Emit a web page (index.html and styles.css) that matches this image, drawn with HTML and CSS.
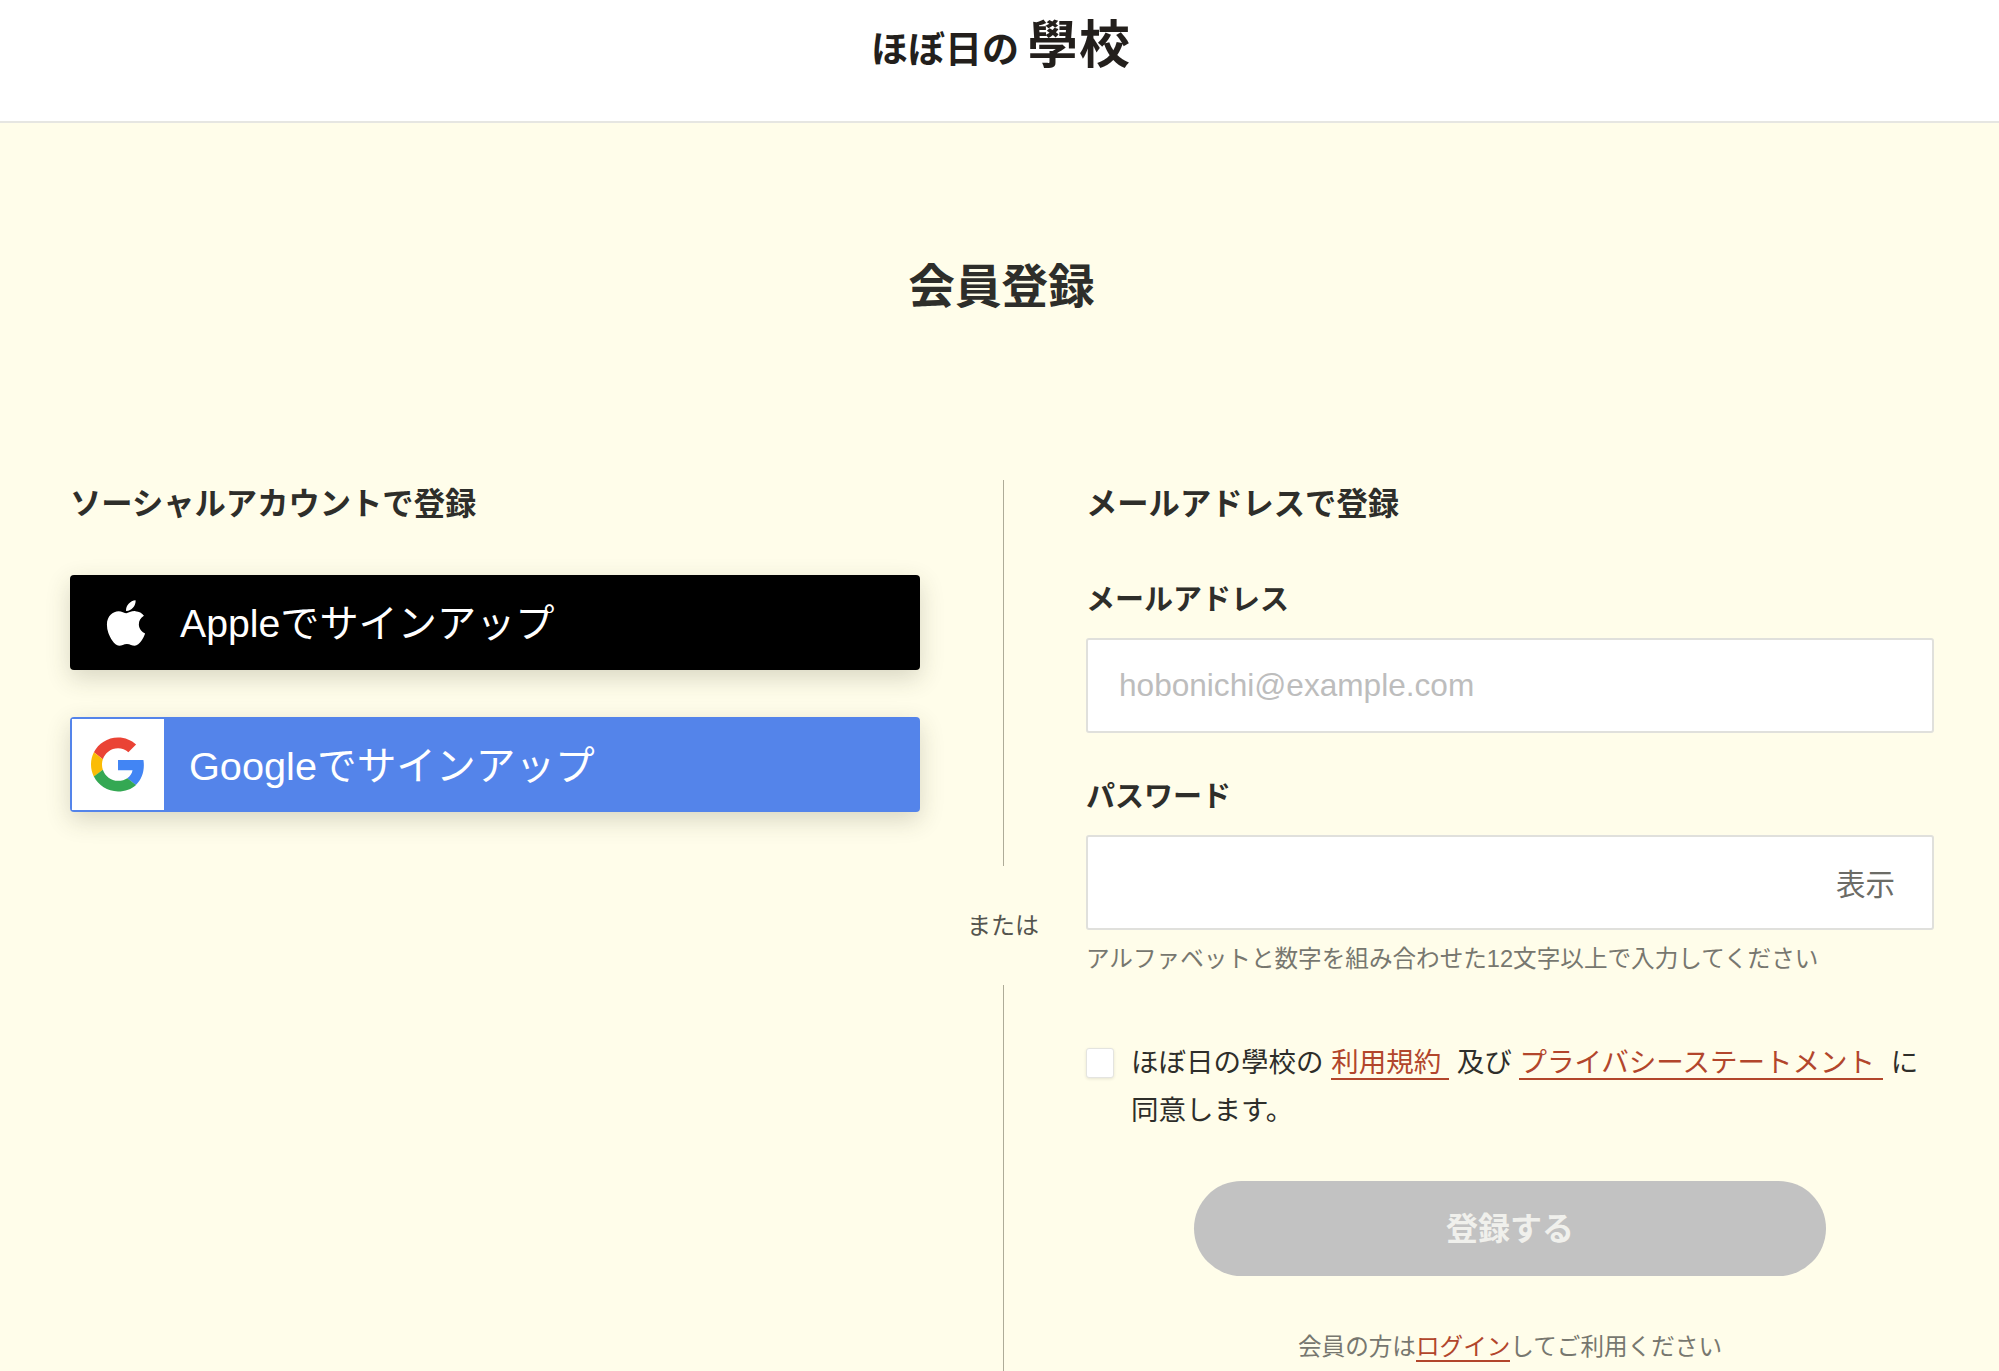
FILE: index.html
```html
<!DOCTYPE html>
<html lang="ja">
<head>
<meta charset="utf-8">
<title>会員登録</title>
<link rel="stylesheet" href="styles.css">
</head>
<body>
<header class="site-header">
  <div class="logo"><span class="logo-small">ほぼ日の</span><span class="logo-large">學校</span></div>
</header>
<main class="main">
  <h1 class="title">会員登録</h1>
  <div class="columns">
    <section class="col">
      <h2 class="section-heading">ソーシャルアカウントで登録</h2>
      <a class="social apple">
        <svg class="apple-icon" viewBox="0 0 384 512"><path fill="#fff" d="M318.7 268.7c-.2-36.7 16.4-64.4 50-84.8-18.8-26.9-47.2-41.7-84.7-44.6-35.5-2.8-74.3 20.7-88.5 20.7-15 0-49.4-19.7-76.4-19.7C63.3 141.2 4 184.8 4 273.5q0 39.3 14.4 81.2c12.8 36.7 59 126.7 107.2 125.2 25.2-.6 43-17.9 75.8-17.9 31.8 0 48.3 17.9 76.4 17.9 48.6-.7 90.4-82.5 102.6-119.3-65.2-30.7-61.7-90-61.7-91.9zm-56.6-164.2c27.3-32.4 24.8-61.9 24-72.5-24.1 1.4-52 16.4-67.9 34.9-17.5 19.8-27.8 44.3-25.6 71.9 26.1 2 49.9-11.4 69.5-34.3z"/></svg>
        <span class="social-label">Appleでサインアップ</span>
      </a>
      <a class="social google">
        <span class="google-box">
          <svg class="google-icon" viewBox="0 0 48 48"><path fill="#EA4335" d="M24 9.5c3.54 0 6.71 1.22 9.21 3.6l6.85-6.85C35.9 2.38 30.47 0 24 0 14.62 0 6.51 5.38 2.56 13.22l7.98 6.19C12.43 13.72 17.74 9.5 24 9.5z"/><path fill="#4285F4" d="M46.98 24.55c0-1.57-.15-3.09-.38-4.55H24v9.02h12.94c-.58 2.96-2.26 5.48-4.78 7.18l7.73 6c4.51-4.18 7.09-10.36 7.09-17.65z"/><path fill="#FBBC05" d="M10.53 28.59c-.48-1.45-.76-2.99-.76-4.59s.27-3.14.76-4.59l-7.98-6.19C.92 16.46 0 20.12 0 24c0 3.88.92 7.54 2.56 10.78l7.97-6.19z"/><path fill="#34A853" d="M24 48c6.48 0 11.93-2.13 16.03-5.81l-7.73-6c-2.15 1.45-4.92 2.3-8.3 2.3-6.26 0-11.57-4.22-13.47-9.91l-7.98 6.19C6.51 42.62 14.62 48 24 48z"/></svg>
        </span>
        <span class="social-label">Googleでサインアップ</span>
      </a>
    </section>
    <div class="divider">
      <div class="line line-top"></div>
      <div class="or">または</div>
      <div class="line line-bottom"></div>
    </div>
    <section class="col">
      <h2 class="section-heading">メールアドレスで登録</h2>
      <label class="field-label first">メールアドレス</label>
      <div class="input"><span class="placeholder">hobonichi@example.com</span></div>
      <label class="field-label second">パスワード</label>
      <div class="input password"><span class="show">表示</span></div>
      <p class="hint">アルファベットと数字を組み合わせた12文字以上で入力してください</p>
      <div class="agree">
        <span class="checkbox"></span>
        <p class="agree-text">ほぼ日の學校の <a class="link term">利用規約</a> 及び <a class="link term">プライバシーステートメント</a> に<br>同意します。</p>
      </div>
      <button class="submit" type="button">登録する</button>
      <p class="login">会員の方は<a class="link">ログイン</a>してご利用ください</p>
    </section>
  </div>
</main>
</body>
</html>
```

FILE: styles.css
```css
* { box-sizing: border-box; }
html, body { margin: 0; height: 1371px; overflow: hidden; }
body {
  background: #fffdea;
  color: #2e2e2a;
  font-family: "Liberation Sans", "Noto Sans CJK JP", sans-serif;
}
.site-header {
  height: 123px;
  background: #fff;
  border-bottom: 2px solid #e6e6e2;
  display: flex;
  justify-content: center;
  align-items: flex-start;
}
.logo {
  display: flex;
  align-items: baseline;
  margin: 11px 0 0 3px;
  color: #231f1c;
  font-family: "Noto Sans CJK JP", sans-serif;
  font-weight: 700;
  line-height: 60px;
}
.logo-small { font-size: 37px; margin-right: 8px; }
.logo-large { font-size: 51px; letter-spacing: 1px; }
.main { padding: 134px 0 0 70px; }
.title {
  margin: 0;
  padding-right: 66px;
  text-align: center;
  font-size: 46.6px;
  line-height: 60px;
  font-weight: 700;
}
.columns {
  display: grid;
  grid-template-columns: 850px 166px 848px;
  margin-top: 163px;
  min-height: 900px;
}
.section-heading {
  margin: 0;
  height: 46px;
  padding-top: 3px;
  font-size: 31.3px;
  line-height: 44px;
  font-weight: 700;
}
.social {
  display: flex;
  align-items: center;
  height: 95px;
  border-radius: 4px;
  color: #fff;
  font-size: 39.2px;
  box-shadow: 0 8px 24px rgba(60, 60, 40, 0.2);
}
.social-label { padding-bottom: 5px; }
.apple { background: #000; margin-top: 49px; padding-left: 34px; }
.apple-icon { width: 44px; height: 52px; margin-right: 32px; }
.google { background: #5484ea; margin-top: 47px; padding: 2px; font-size: 39.7px; }
.google-box {
  width: 92px;
  height: 91px;
  background: #fff;
  margin-right: 25px;
  display: flex;
  align-items: center;
  justify-content: center;
}
.google-icon { width: 54px; height: 55px; }
.divider {
  display: flex;
  flex-direction: column;
  align-items: center;
}
.line { width: 1px; background: #aeab98; }
.line-top { height: 386px; }
.line-bottom { flex: 1; }
.or {
  height: 119px;
  padding-bottom: 5px;
  display: flex;
  align-items: center;
  font-size: 24px;
  color: #55554f;
}
.field-label {
  display: block;
  font-size: 29px;
  line-height: 40px;
  font-weight: 700;
}
.field-label.first { margin-top: 54px; }
.field-label.second { margin-top: 44px; }
.input {
  margin-top: 18px;
  height: 95px;
  background: #fff;
  border: 2px solid #e0e0dc;
  border-radius: 3px;
  display: flex;
  align-items: center;
  padding: 0 37px 1px 31px;
  font-size: 31.6px;
}
.placeholder { color: #bdbdbd; }
.password { justify-content: flex-end; }
.show { color: #6b6b66; font-size: 29.5px; }
.hint {
  margin: 13px 0 0;
  font-size: 23.6px;
  line-height: 32px;
  color: #77776f;
}
.agree {
  display: flex;
  margin-top: 64px;
  gap: 17px;
}
.checkbox {
  flex: none;
  width: 28px;
  height: 30px;
  margin-top: 9px;
  background: #fff;
  border: 1px solid #e4e4e0;
  border-radius: 3px;
  box-shadow: 0 1px 3px rgba(60, 60, 40, 0.12);
}
.agree-text {
  margin: 0;
  font-size: 27.5px;
  line-height: 48px;
}
.link {
  color: #b2462c;
  border-bottom: 2px solid #b2462c;
}
.term { padding-right: 8px; }
.submit {
  display: block;
  width: 632px;
  height: 95px;
  margin: 46px auto 0;
  padding: 0 0 5px;
  border: 0;
  border-radius: 48px;
  background: #c2c2c2;
  color: #f0f0ec;
  font-family: inherit;
  font-size: 32px;
  font-weight: 700;
}
.login {
  margin: 55px 0 0;
  text-align: center;
  font-size: 23.6px;
  line-height: 32px;
  color: #77776f;
}
```
